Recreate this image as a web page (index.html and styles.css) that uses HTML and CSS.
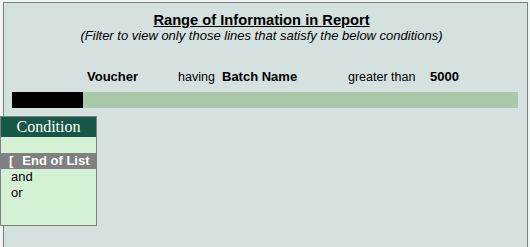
FILE: index.html
```html
<!DOCTYPE html>
<html>
<head>
<meta charset="utf-8">
<link rel="stylesheet" href="styles.css">
</head>
<body>
<div class="panel">
  <div class="title">Range of Information in Report</div>
  <div class="subtitle">(Filter to view only those lines that satisfy the below conditions)</div>
  <div class="row">
    <span class="b">Voucher</span>
    <span>having</span>
    <span class="b">Batch Name</span>
    <span>greater than</span>
    <span class="b">5000</span>
  </div>
  <div class="bar"><div class="bar-fill"></div></div>
</div>
<div class="popup">
  <div class="popup-head">Condition</div>
  <div class="popup-body">
    <div class="item empty"></div>
    <div class="item selected"><span class="br">[</span><span>End of List</span></div>
    <div class="item">and</div>
    <div class="item">or</div>
  </div>
</div>
</body>
</html>
```
FILE: styles.css
```css
html, body {
  margin: 0;
  padding: 0;
}
body {
  background: #eef5f3;
  width: 530px;
  height: 247px;
  position: relative;
  font-family: "Liberation Sans", Arial, sans-serif;
  color: #000;
  overflow: hidden;
}
.panel {
  margin: 2px 0 0 3px;
  width: 523px;
  height: 240px;
  border: 1px solid #7b8280;
  background: #d5e1de;
  padding-top: 9px;
  box-sizing: content-box;
}
.panel > * {
  box-sizing: border-box;
}
.title {
  font-weight: bold;
  font-size: 14.7px;
  line-height: 16px;
  text-decoration: underline;
  text-align: center;
  padding-right: 8px;
}
.subtitle {
  font-style: italic;
  font-size: 13px;
  line-height: 15px;
  text-align: center;
  padding-right: 8px;
}
.row {
  margin-top: 26px;
  padding-left: 83px;
  display: grid;
  grid-template-columns: 91px 44px 126px 82px auto;
  font-size: 12.5px;
  line-height: 16px;
}
.row .b {
  font-weight: bold;
  font-size: 13px;
}
.bar {
  margin: 7px 0 0 8px;
  width: 506px;
  height: 16px;
  background: #a8c8a9;
}
.bar-fill {
  width: 71px;
  height: 16px;
  background: #000;
}
.popup {
  position: absolute;
  left: 0;
  top: 116px;
  width: 95px;
  height: 108px;
  border: 1px solid #7b8280;
  background: #d5f1d5;
}
.popup-head {
  height: 20px;
  background: #175848;
  color: #fff;
  font-family: "Liberation Serif", "Times New Roman", serif;
  font-size: 16px;
  line-height: 20px;
  text-align: center;
}
.item {
  height: 16px;
  line-height: 16px;
  font-size: 13px;
  padding-left: 10px;
}
.item.selected {
  background: #808080;
  color: #fff;
  font-weight: bold;
  padding-left: 8px;
  display: flex;
  gap: 9px;
}
```
